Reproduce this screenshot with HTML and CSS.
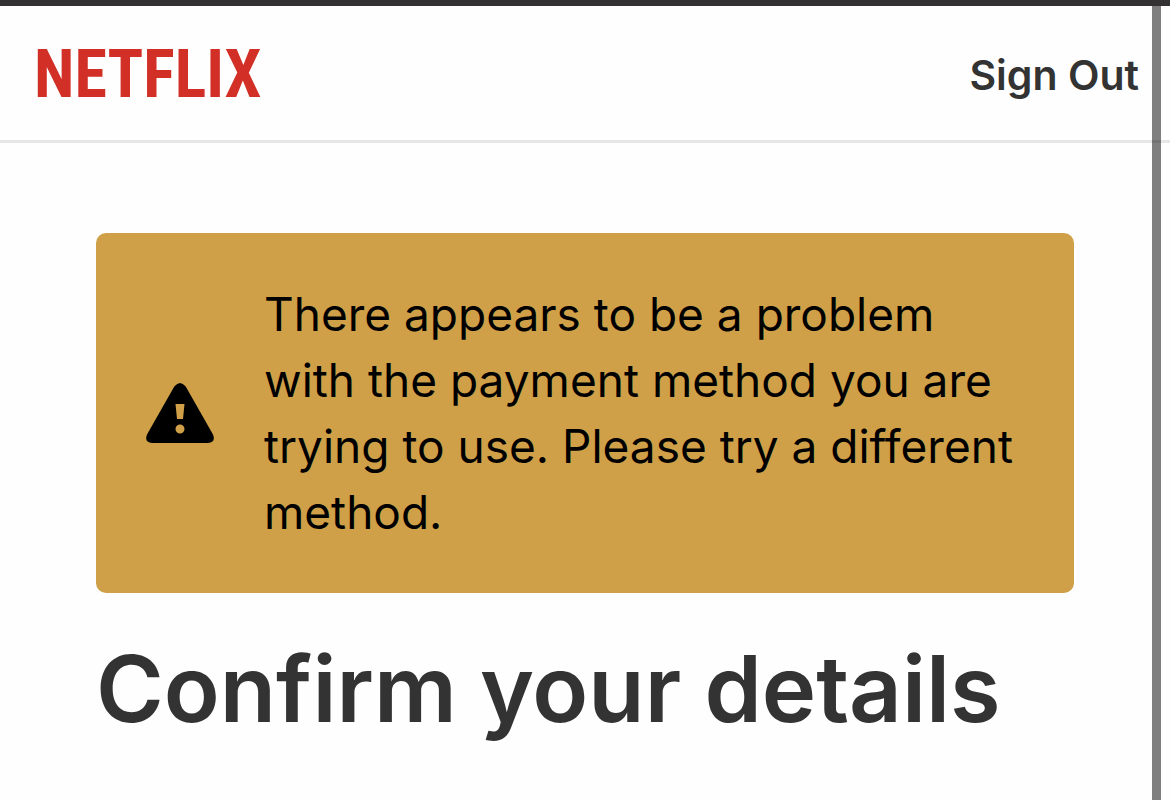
FILE: index.html
```html
<!DOCTYPE html>
<html lang="en">
<head>
<meta charset="utf-8">
<meta name="viewport" content="width=device-width, initial-scale=1">
<title>Confirm your details</title>
<link rel="stylesheet" href="styles.css">
</head>
<body>
<div class="page">
  <header class="header">
    <a class="brand" href="#">NETFLIX</a>
    <a class="sign-out" href="#">Sign Out</a>
  </header>
  <main class="content">
    <div class="alert" role="alert">
      <svg class="alert-icon" viewBox="0 0 68 60" aria-hidden="true">
        <path fill-rule="evenodd" d="M28.300 3.500Q34-3.500 39.700 3.500L67 51.500Q70 59.500 62 60H6Q-2 59.500 1 51.500ZM29.500 21L31 36H37L38.500 21ZM34 41.500A4.500 4.500 0 1 0 34 50.500A4.500 4.500 0 1 0 34 41.500Z"/>
      </svg>
      <p class="alert-text">There appears to be a problem with the payment method you are trying to use. Please try a different method.</p>
    </div>
    <h1 class="title">Confirm your details</h1>
  </main>
  <div class="scrollbar"></div>
</div>
</body>
</html>
```
FILE: styles.css
```css
* {
  box-sizing: border-box;
}

body {
  margin: 0;
  background: #fefefe;
  color: #333;
  font-family: Inter, "Liberation Sans", sans-serif;
}

.page {
  position: relative;
  min-height: 100vh;
  overflow: hidden;
  border-top: 6px solid #333132;
}

.header {
  display: flex;
  align-items: center;
  justify-content: space-between;
  padding: 29px 31px 25px 34px;
  border-bottom: 3px solid #e6e6e6;
}

.brand {
  color: #d22f27;
  font-family: "Liberation Sans Narrow", "Roboto Condensed", "Open Sans Condensed", "DejaVu Sans Condensed", sans-serif;
  font-size: 66px;
  font-weight: 700;
  line-height: 80px;
  text-decoration: none;
}

.sign-out {
  color: #333;
  font-size: 41px;
  font-weight: 600;
  line-height: 48px;
  text-decoration: none;
}

.content {
  padding: 90px 96px 0;
}

.alert {
  display: flex;
  align-items: center;
  gap: 50px;
  padding: 48px 50px;
  border-radius: 10px;
  background: #cfa047;
  color: #000;
}

.alert-icon {
  flex: none;
  width: 68px;
  height: 60px;
}

.alert-text {
  margin: 0;
  font-size: 46px;
  line-height: 66px;
}

.title {
  margin: 36px 0 0;
  font-size: 92px;
  font-weight: 600;
  line-height: 120px;
  white-space: nowrap;
}

.scrollbar {
  position: absolute;
  top: 0;
  right: 9px;
  bottom: 0;
  width: 9px;
  background: rgba(0, 0, 0, 0.5);
}
```
